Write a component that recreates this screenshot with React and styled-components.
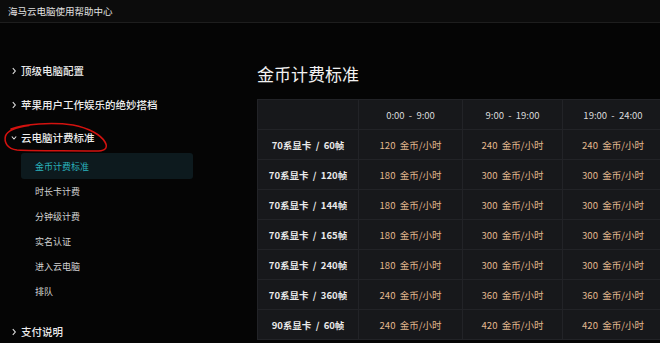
import React from 'react';
import styled, { createGlobalStyle } from 'styled-components';

const GlobalStyle = createGlobalStyle`
  html, body {
    margin: 0;
    padding: 0;
    background: #050505;
    overflow: hidden;
  }
  body {
    font-family: "Noto Sans", "Noto Sans CJK SC", sans-serif;
    color: #e6e6e6;
  }
`;

const navTop = [
  { label: '顶级电脑配置' },
  { label: '苹果用户工作娱乐的绝妙搭档' },
];

const subItems = ['金币计费标准', '时长卡计费', '分钟级计费', '实名认证', '进入云电脑', '排队'];

const times = ['0:00  -  9:00', '9:00  -  19:00', '19:00  -  24:00'];

const rows = [
  { card: '70系显卡', fps: '60帧', prices: [120, 240, 240] },
  { card: '70系显卡', fps: '120帧', prices: [180, 300, 300] },
  { card: '70系显卡', fps: '144帧', prices: [180, 300, 300] },
  { card: '70系显卡', fps: '165帧', prices: [180, 300, 300] },
  { card: '70系显卡', fps: '240帧', prices: [180, 300, 300] },
  { card: '70系显卡', fps: '360帧', prices: [240, 360, 360] },
  { card: '90系显卡', fps: '60帧', prices: [240, 420, 420] },
];

const Chevron = ({ open }) => (
  <ChevronIcon viewBox="0 0 6 8">
    {open
      ? <path d="M0.8 2.5 L3 5 L5.2 2.5" />
      : <path d="M1.8 1.2 L4.3 4 L1.8 6.8" />}
  </ChevronIcon>
);

const App = () => {
  return (
    <>
      <GlobalStyle />
      <Page>
        <TopBar>
          <Brand>海马云电脑使用帮助中心</Brand>
        </TopBar>
        <Main>
          <Sidebar>
            {navTop.map(item => (
              <NavItem key={item.label}>
                <Chevron />
                <span>{item.label}</span>
              </NavItem>
            ))}
            <NavItem short>
              <Chevron open />
              <span>云电脑计费标准</span>
            </NavItem>
            <SubList>
              {subItems.map((s, i) => (
                <SubItem key={s} active={i === 0}>{s}</SubItem>
              ))}
            </SubList>
            <NavItem>
              <Chevron />
              <span>支付说明</span>
            </NavItem>
            {/* red hand-drawn annotation around the open section */}
            <Scribble viewBox="0 0 106 30" fill="none">
              <path d="M8 6 C 22 1, 48 -1, 70 2 C 86 5, 98 12, 102 19 C 106 26, 101 28.5, 90 28 C 64 27.5, 34 28, 14 27 C 4 26, 1 19, 2.5 13 C 4 8, 12 4.5, 26 2.5" />
            </Scribble>
          </Sidebar>
          <Content>
            <Title>金币计费标准</Title>
            <Table>
              <thead>
                <tr>
                  <HeadCell />
                  {times.map(t => <HeadCell key={t}>{t}</HeadCell>)}
                </tr>
              </thead>
              <tbody>
                {rows.map((r, i) => (
                  <tr key={i}>
                    <NameCell>{r.card}  /  {r.fps}</NameCell>
                    {r.prices.map((p, j) => (
                      <PriceCell key={j}>{p}  金币/小时</PriceCell>
                    ))}
                  </tr>
                ))}
              </tbody>
            </Table>
          </Content>
        </Main>
      </Page>
    </>
  );
};

const Page = styled.div`
  width: 660px;
  height: 343px;
  overflow: hidden;
  background: #050505;
`;

const TopBar = styled.div`
  height: 23px;
  background: #0c0c0c;
  border-bottom: 1px solid #1e1e1e;
  display: flex;
  align-items: center;
  padding-left: 8px;
  box-sizing: border-box;
`;

const Brand = styled.div`
  font-size: 9.5px;
  color: #e0e0e0;
  font-family: "Noto Sans CJK SC", sans-serif;
`;

const Main = styled.div`
  display: grid;
  grid-template-columns: 257px 1fr;
`;

const Sidebar = styled.div`
  position: relative;
  padding-top: 30px;
  display: flex;
  flex-direction: column;
`;

const NavItem = styled.div`
  height: ${props => props.short ? '32px' : '34px'};
  display: flex;
  align-items: center;
  gap: 4px;
  padding-left: 11px;
  font-size: 10.5px;
  font-weight: 500;
  color: #ececec;
  font-family: "Noto Sans CJK SC", sans-serif;
`;

const ChevronIcon = styled.svg`
  width: 6px;
  height: 8px;
  stroke: #e0e0e0;
  stroke-width: 1.1;
  fill: none;
  margin-top: 1px;
`;

const SubList = styled.div`
  display: flex;
  flex-direction: column;
  margin-bottom: 10px;
`;

const SubItem = styled.div`
  height: ${props => props.active ? '26px' : '25px'};
  width: 172px;
  margin-left: 21px;
  padding-left: 14px;
  box-sizing: border-box;
  display: flex;
  align-items: center;
  font-size: 9px;
  font-family: "Noto Sans CJK SC", sans-serif;
  color: ${props => props.active ? '#2ab3bd' : '#d2d2d2'};
  background: ${props => props.active ? '#0d1a1e' : 'transparent'};
  border-radius: 3px;
`;

const Scribble = styled.svg`
  position: absolute;
  left: 3px;
  top: 100px;
  width: 106px;
  height: 30px;
  overflow: visible;
  path {
    stroke: #d3120f;
    stroke-width: 1.6;
    stroke-linecap: round;
  }
`;

const Content = styled.div`
  padding-top: 38px;
`;

const Title = styled.div`
  font-size: 17px;
  line-height: 26px;
  color: #f2f2f2;
  font-family: "Noto Sans CJK SC", sans-serif;
  margin-bottom: 12px;
`;

const Table = styled.table`
  border-collapse: collapse;
  table-layout: fixed;
  width: 406px;
  background: #17181b;
  font-family: "Noto Sans CJK SC", sans-serif;
  font-size: 9.5px;

  td, th {
    height: 30px;
    padding: 0;
    border: 1px solid #222327;
    text-align: center;
    white-space: pre;
    box-sizing: border-box;
  }
  th:nth-child(1) { width: 101px; }
  th:nth-child(2) { width: 104px; }
  th:nth-child(3) { width: 100px; }
  th:nth-child(4) { width: 101px; }
`;

const HeadCell = styled.th`
  font-weight: 400;
  color: #dcdcdc;
`;

const NameCell = styled.td`
  font-weight: 700;
  color: #eaeaea;
`;

const PriceCell = styled.td`
  color: #e2b98f;
`;

export default App;
